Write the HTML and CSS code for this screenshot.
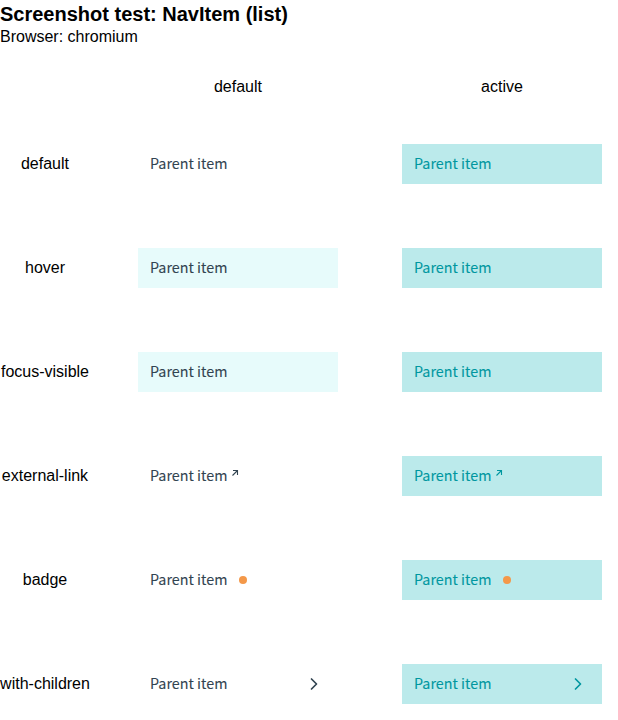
FILE: index.html
```html
<!DOCTYPE html>
<html lang="en">
<head>
<meta charset="utf-8">
<title>NavItem (list)</title>
<link rel="stylesheet" href="styles.css">
</head>
<body>
<h1>Screenshot test: NavItem (list)</h1>
<p class="browser">Browser: chromium</p>
<table>
<thead><tr><th></th><th>default</th><th>active</th></tr></thead>
<tbody>
<tr><th>default</th><td><div class="item"><span class="label">Parent item</span></div></td><td><div class="item active"><span class="label">Parent item</span></div></td></tr>
<tr><th>hover</th><td><div class="item hover"><span class="label">Parent item</span></div></td><td><div class="item active"><span class="label">Parent item</span></div></td></tr>
<tr><th>focus-visible</th><td><div class="item hover"><span class="label">Parent item</span></div></td><td><div class="item active"><span class="label">Parent item</span></div></td></tr>
<tr><th>external-link</th><td><div class="item"><span class="label">Parent item</span><svg class="ext" viewBox="0 0 8 8"><path d="M2 1.500h4.500v4.500M6.500 1.500l-5 5"/></svg></div></td><td><div class="item active"><span class="label">Parent item</span><svg class="ext" viewBox="0 0 8 8"><path d="M2 1.500h4.500v4.500M6.500 1.500l-5 5"/></svg></div></td></tr>
<tr><th>badge</th><td><div class="item"><span class="label">Parent item</span><span class="dot"></span></div></td><td><div class="item active"><span class="label">Parent item</span><span class="dot"></span></div></td></tr>
<tr><th>with-children</th><td><div class="item"><span class="label">Parent item</span><svg class="chevron" viewBox="0 0 24 24"><path d="M9.500 7l5 5-5 5"/></svg></div></td><td><div class="item active"><span class="label">Parent item</span><svg class="chevron" viewBox="0 0 24 24"><path d="M9.500 7l5 5-5 5"/></svg></div></td></tr>
</tbody>
</table>
</body>
</html>
```
FILE: styles.css
```css
body { margin: 0; background: #fff; color: #000; font: 16px/18px "Liberation Sans", Arial, sans-serif; height: 720px; overflow: hidden; }
h1 { margin: 0; padding-top: 3px; font-size: 20px; line-height: 23px; }
.browser { margin: 2px 0 0; line-height: 18px; }
table { border-collapse: collapse; table-layout: fixed; width: 634px; margin-top: 14px; }
th { padding: 0; font-weight: 400; text-align: center; width: 90px; }
thead th { box-sizing: border-box; height: 52px; width: auto; padding-top: 2px; }
thead th:first-child { width: 106px; }
tbody th { padding-right: 16px; white-space: nowrap; }
td { padding: 32px; height: 40px; }
.item { display: flex; align-items: center; box-sizing: border-box; width: 200px; height: 40px; padding: 0 12px; background: #fff; color: #324451; font: 14.32px/24px "Noto Sans CJK SC", sans-serif; }
.label { margin-top: -2px; -webkit-text-stroke: 0.08px currentColor; }
.hover { background: #e7fbfb; }
.active { background: #bbeaeb; color: #0097a0; }
.ext { width: 8px; height: 8px; margin: -6px 0 0 4px; fill: none; stroke: currentColor; stroke-width: 1.1; }
.dot { width: 8px; height: 8px; margin-left: 12px; border-radius: 50%; background: #f49849; }
.chevron { width: 24px; height: 24px; margin-left: auto; fill: none; stroke: currentColor; stroke-width: 1.7; stroke-linejoin: round; stroke-linecap: round; }
```
